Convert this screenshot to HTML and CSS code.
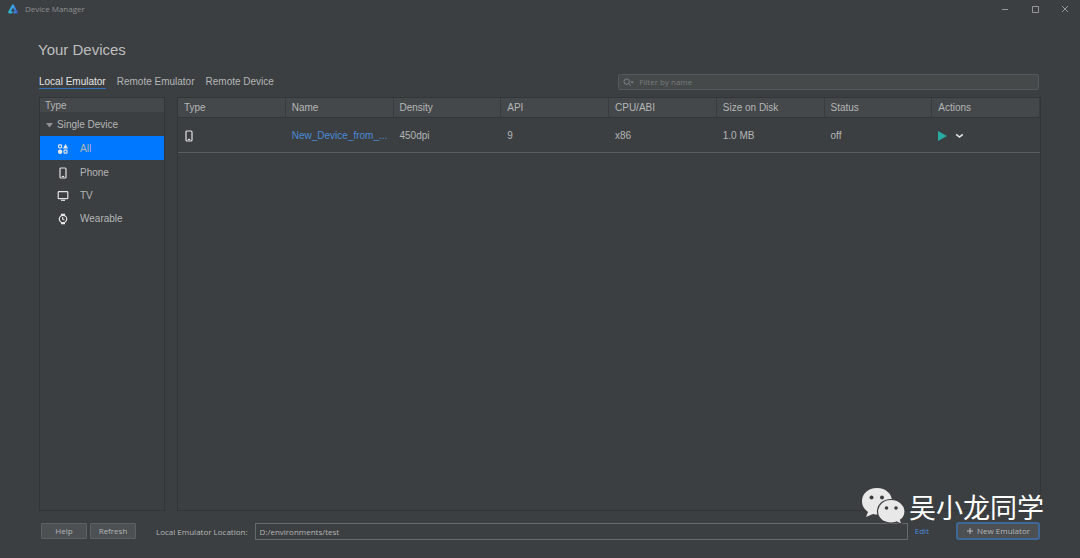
FILE: index.html
```html
<!DOCTYPE html>
<html lang="en">
<head>
<meta charset="utf-8">
<meta name="viewport" content="width=device-width, initial-scale=1">
<title>Device Manager</title>
<link rel="stylesheet" href="styles.css">
</head>
<body>
<header class="titlebar">
  <svg class="logo" viewBox="0 0 12 12" aria-hidden="true">
    <defs><linearGradient id="lg" x1="0" x2="1"><stop offset="0" stop-color="#2bb4cc"/><stop offset=".5" stop-color="#3aa0e8"/><stop offset="1" stop-color="#3f63c8"/></linearGradient></defs>
    <path d="M4.600 9.300H2.200L5.900 2.400 9.700 9.300H7.400" fill="none" stroke="url(#lg)" stroke-width="2.200" stroke-linejoin="round" stroke-linecap="round"/>
  </svg>
  <span class="app-name">Device Manager</span>
  <div class="window-controls">
    <button type="button" aria-label="Minimize"><svg viewBox="0 0 10 10"><path d="M2 5.500H8"/></svg></button>
    <button type="button" aria-label="Maximize"><svg viewBox="0 0 10 10"><path d="M2.500 2.500H8.500V8.500H2.500Z"/></svg></button>
    <button type="button" aria-label="Close"><svg viewBox="0 0 10 10"><path d="M2 2 8 8M8 2 2 8"/></svg></button>
  </div>
</header>
<main class="content">
  <h1>Your Devices</h1>
  <div class="toolbar">
    <nav class="tabs">
      <a class="active" href="#local">Local Emulator</a>
      <a href="#remote-emulator">Remote Emulator</a>
      <a href="#remote-device">Remote Device</a>
    </nav>
    <label class="search">
      <svg viewBox="0 0 12 10" aria-hidden="true"><circle cx="4" cy="4" r="3"/><path d="M6.200 6.200 8.500 8.500"/><path class="solid" d="M8 4h4L10 6Z"/></svg>
      <input type="text" placeholder="Filter by name" aria-label="Filter by name">
    </label>
  </div>
  <div class="panels">
    <aside class="sidebar">
      <h2>Type</h2>
      <button class="group" type="button"><svg viewBox="0 0 7 5" aria-hidden="true"><path d="M0 0H7L3.500 4.500Z"/></svg>Single Device</button>
      <ul>
        <li><button class="item selected" type="button">
          <svg viewBox="0 0 12 12" aria-hidden="true"><rect x="1.600" y="1.900" width="3" height="3" rx=".8"/><path class="solid" d="M8.500 1 11 5.400H6Z"/><circle class="solid" cx="3.100" cy="8.700" r="2.200"/><rect x="7" y="7.200" width="3" height="3" rx=".8"/></svg>All</button></li>
        <li><button class="item" type="button">
          <svg viewBox="0 0 12 12" aria-hidden="true"><rect x="3" y="1" width="6" height="10" rx="1"/><path d="M4.800 9.500H7.200"/></svg>Phone</button></li>
        <li><button class="item" type="button">
          <svg viewBox="0 0 12 12" aria-hidden="true"><rect x="1.200" y="1.700" width="9.600" height="7" rx=".8"/><path d="M4 10.300H8"/></svg>TV</button></li>
        <li><button class="item" type="button">
          <svg viewBox="0 0 12 12" aria-hidden="true"><circle cx="6" cy="6" r="3.700"/><path class="solid" d="M4 .8H8V2.800H4ZM4 9.200H8V11.200H4Z"/><path d="M5.700 4V6.200L7.500 7"/></svg>Wearable</button></li>
      </ul>
    </aside>
    <section class="devices">
      <table>
        <thead><tr><th>Type</th><th>Name</th><th>Density</th><th>API</th><th>CPU/ABI</th><th>Size on Disk</th><th>Status</th><th>Actions</th></tr></thead>
        <tbody><tr>
          <td><svg class="phone" viewBox="0 0 12 12" role="img" aria-label="Phone"><rect x="3" y="1" width="6" height="10" rx="1"/><path d="M4.800 9.500H7.200"/></svg></td>
          <td><a href="#device">New_Device_from_...</a></td>
          <td>450dpi</td><td>9</td><td>x86</td><td>1.0 MB</td><td>off</td>
          <td><div class="actions">
            <button type="button" aria-label="Start"><svg viewBox="0 0 9 10"><path fill="#2aa9a0" d="M0 0 9 5 0 10Z"/></svg></button>
            <button type="button" aria-label="More actions"><svg viewBox="0 0 9 10"><path fill="none" stroke="#e6e6e6" stroke-width="1.600" d="M1.200 3.300 4.500 6 7.800 3.300"/></svg></button>
          </div></td>
        </tr></tbody>
      </table>
    </section>
  </div>
  <footer class="footer">
    <button class="btn" type="button">Help</button>
    <button class="btn" type="button">Refresh</button>
    <label for="location">Local Emulator Location:</label>
    <input id="location" type="text" value="D:/environments/test">
    <a href="#edit">Edit</a>
    <button class="btn primary" type="button"><svg viewBox="0 0 8 8" aria-hidden="true"><path d="M4 1V7M1 4H7"/></svg>New Emulator</button>
  </footer>
</main>
<div class="watermark">
  <svg viewBox="0 0 44 38" aria-hidden="true">
    <path fill="#e8e8e8" d="M16 1C7 1 1 7 1 14c0 5 2 8 6 11L5 30l7-3c2 .5 4 .6 6 .5C24 27 31 22 31 14 31 7 25 1 16 1Z"/>
    <circle class="eye" cx="10.500" cy="10.500" r="2"/><circle class="eye" cx="21" cy="10.500" r="2"/>
    <path fill="#e8e8e8" stroke="#3c3f41" stroke-width="1.200" d="M30 12.500C22 12.500 16.500 18 16.500 24.500S22 36 30 36c2 0 4-.3 5.500-1L41 37.500 39.500 33C42.500 31 44 28 44 24.500 44 18 38 12.500 30 12.500Z"/>
    <circle class="eye" cx="25.500" cy="21" r="1.800"/><circle class="eye" cx="35" cy="21" r="1.800"/>
  </svg>
  <span lang="zh">吴小龙同学</span>
</div>
</body>
</html>
```

FILE: styles.css
```css
* { box-sizing: border-box; }
body {
  margin: 0;
  min-height: 100vh;
  display: flex;
  flex-direction: column;
  background: #3c3f41;
  color: #b4b6b7;
  font: 10px/12px "Liberation Sans", sans-serif;
}
button, input { font: inherit; color: inherit; margin: 0; padding: 0; border: 0; background: none; }
button { display: inline-flex; align-items: center; }
a { color: #4b8bd8; text-decoration: none; }
svg { display: block; flex: none; }

.titlebar { display: flex; align-items: center; height: 18px; padding: 0 10px 0 7px; }
.logo { width: 12px; height: 12px; }
.app-name { margin-left: 6px; font: 8px/12px "Open Sans", sans-serif; color: #8d9092; }
.window-controls { display: flex; gap: 20px; margin-left: auto; }
.window-controls svg { width: 10px; height: 10px; fill: none; stroke: #96989a; }

.content { flex: 1; display: flex; flex-direction: column; padding: 22px 39px 18px 39px; }
h1 { margin: 0 0 0 -1px; font-size: 15px; line-height: 20px; font-weight: 400; color: #bcbebf; }
.toolbar { display: flex; align-items: center; justify-content: space-between; height: 20px; margin-top: 12px; }
.tabs { display: flex; gap: 11px; padding-top: 1px; }
.tabs a { color: #b4b6b7; border-bottom: 1px solid transparent; }
.tabs .active { color: #e4e4e4; border-color: #3070b8; }
.search {
  display: flex; align-items: center; gap: 5px;
  width: 42%; height: 16px; margin-right: 2px; padding: 0 4px;
  background: #45494a; border: 1px solid #55595b; border-radius: 2px;
}
.search svg { width: 11px; height: 9px; fill: none; stroke: #85898b; }
.search .solid { fill: #85898b; stroke: none; }
.search input { flex: 1; min-width: 0; font: 8px/12px "Open Sans", sans-serif; outline: 0; }
.search input::placeholder { color: #777b7d; opacity: 1; }

.panels { flex: 1; display: flex; gap: 12px; margin-top: 5px; }
.sidebar { width: 126px; border: 1px solid #333638; }
.sidebar h2 { margin: 0; padding: 2px 5px 0; font-size: 10px; line-height: 12px; font-weight: 400; background: #45484a; }
.group { height: 24px; gap: 4px; padding: 2px 0 0 6px; }
.group svg { width: 7px; height: 5px; fill: #8f9193; }
.sidebar ul { margin: 0; padding: 0; list-style: none; }
.item { width: 100%; height: 23px; padding: 2px 0 0 17px; gap: 11px; }
.item.selected { height: 24px; background: #0078ff; }
.item svg, .phone { width: 12px; height: 12px; fill: none; stroke: #e2e2e2; stroke-width: 1.2; }
.item .solid { fill: #e8e8e8; stroke: none; }

.devices { flex: 1; border: 1px solid #333638; }
table { width: 100%; table-layout: fixed; border-collapse: separate; border-spacing: 0; }
th, td { padding: 1px 0 0 6px; text-align: left; font-weight: 400; white-space: nowrap; }
th { height: 20px; background: #45484a; border-right: 1px solid #393c3e; border-bottom: 1px solid #35383a; }
td { height: 35px; border-bottom: 1px solid #5b5e60; }
.phone { margin-left: -1px; }
.actions { display: flex; gap: 8px; }
.actions svg { width: 9px; height: 10px; }

.footer { display: flex; align-items: center; margin: 11px 1px 0 2px; font: 8px/12px "Open Sans", sans-serif; }
.btn { justify-content: center; width: 46px; height: 16px; background: #4c5052; border: 1px solid #5e6163; border-radius: 1px; }
.btn + .btn { margin-left: 3px; }
.footer label { margin-left: 20px; padding-top: 1px; }
.footer input { flex: 1; min-width: 0; height: 17px; margin-left: 7px; padding: 0 4px; border: 1px solid #67696b; }
.footer a { margin: 0 27px 0 7px; }
.btn.primary { width: 84px; gap: 3px; border: 2px solid #3f6898; border-radius: 3px; height: 18px; }
.btn svg { width: 8px; height: 8px; fill: none; stroke: #bbb; }

.watermark {
  position: absolute; right: 36px; bottom: 31px;
  display: flex; align-items: center; gap: 4px;
  color: #fff; font: 27px/40px "Noto Sans CJK SC", sans-serif;
  pointer-events: none;
}
.watermark svg { width: 44px; height: 38px; }
.watermark span { padding-top: 2px; }
.eye { fill: #3c3f41; }
```
